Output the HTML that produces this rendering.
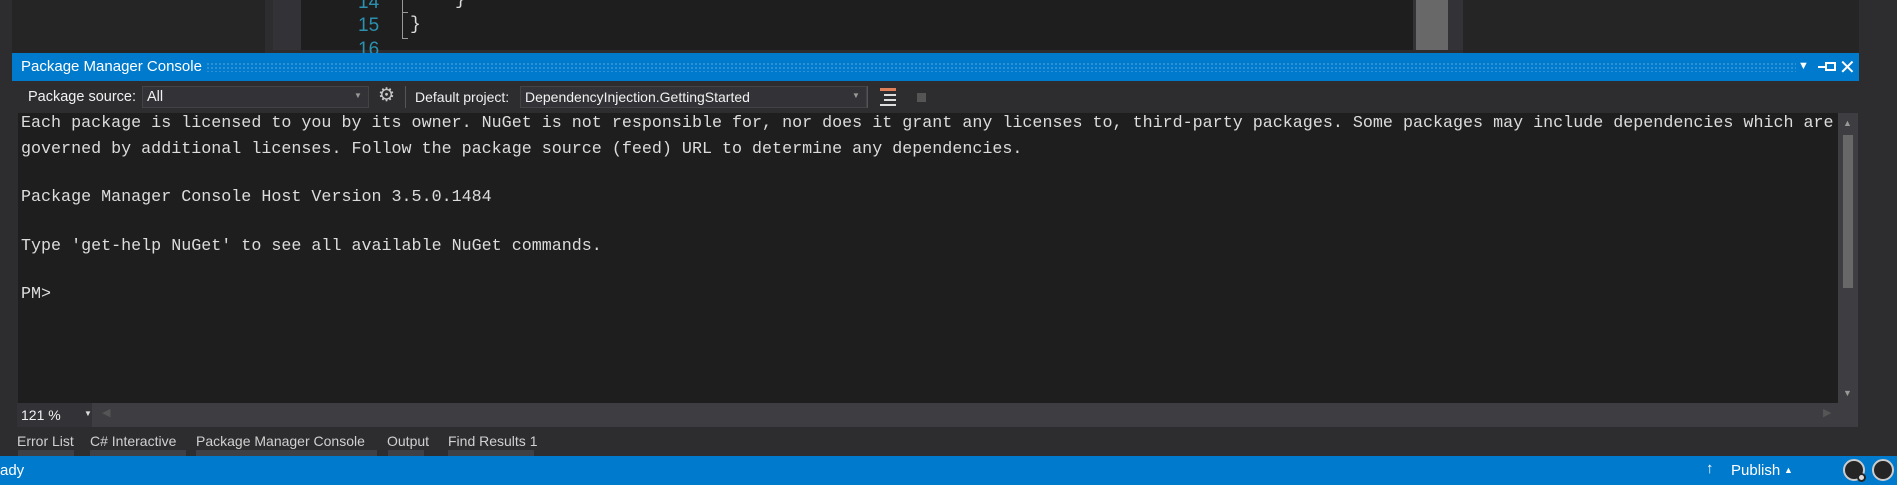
<!DOCTYPE html>
<html><head><style>
*{margin:0;padding:0;box-sizing:border-box}
body{width:1897px;height:485px;background:#2d2d30;position:relative;overflow:hidden;font-family:"Liberation Sans",sans-serif;color:#f1f1f1}
.a{position:absolute}
.ui{font-family:"Liberation Sans",sans-serif;font-size:14.5px;white-space:nowrap;line-height:18px}
.mono{font-family:"Liberation Mono",monospace;font-size:16.7px;color:#dcdcdc;white-space:pre;line-height:24.2px}
.ln{font-family:"Liberation Sans",sans-serif;font-size:19px;color:#2b91af;line-height:22px}
</style></head><body>
<!-- top editor area -->
<div class="a" style="left:12px;top:0;width:253px;height:53px;background:#252526"></div>
<div class="a" style="left:273px;top:0;width:28px;height:50px;background:#333337"></div>
<div class="a" style="left:301px;top:0;width:1112px;height:50px;background:#1e1e1e"></div>
<div class="a ln" style="left:358px;top:-8px">14</div>
<div class="a ln" style="left:358px;top:15px">15</div>
<div class="a ln" style="left:358px;top:39px">16</div>
<div class="a mono" style="left:455px;top:-12px;font-size:18px">}</div>
<div class="a mono" style="left:410px;top:13px;font-size:18px">}</div>
<div class="a" style="left:402px;top:0;width:1px;height:39px;background:#999"></div>
<div class="a" style="left:402px;top:12px;width:6px;height:1px;background:#999"></div>
<div class="a" style="left:402px;top:38px;width:6px;height:1px;background:#999"></div>
<div class="a" style="left:1413px;top:0;width:50px;height:50px;background:#333337"></div>
<div class="a" style="left:1416px;top:0;width:32px;height:50px;background:#686868"></div>
<div class="a" style="left:1463px;top:0;width:396px;height:53px;background:#252526"></div>
<!-- title -->
<div class="a" style="left:12px;top:53px;width:1847px;height:28px;background:#007acc"></div>
<div class="a" style="left:206px;top:62px;width:1590px;height:10px;background-image:radial-gradient(#3d9ad8 0.8px,transparent 1px);background-size:4px 4px"></div>
<div class="a ui" style="left:21px;top:58px;font-size:15px;color:#fff">Package Manager Console</div>
<div class="a" style="left:1798px;top:60px;font-size:11px;color:#fff">▼</div>
<div class="a" style="left:1818px;top:66px;width:8px;height:2px;background:#fff"></div>
<div class="a" style="left:1825px;top:62px;width:11px;height:9px;border:2px solid #fff"></div>
<div class="a" style="left:1839px;top:55px;font-size:20px;color:#fff">✕</div>
<!-- toolbar -->
<div class="a ui" style="left:28px;top:88px">Package source:</div>
<div class="a" style="left:142px;top:86px;width:227px;height:22px;background:#333337;border:1px solid #434346"></div>
<div class="a ui" style="left:147px;top:88px">All</div>
<div class="a" style="left:354px;top:91px;font-size:8px;color:#999">▼</div>
<div class="a" style="left:378px;top:84px;font-size:19px;color:#c8c8c8">⚙</div>
<div class="a" style="left:405px;top:86px;width:1px;height:22px;background:#555"></div>
<div class="a ui" style="left:415px;top:88px;font-size:14px">Default project:</div>
<div class="a" style="left:520px;top:86px;width:347px;height:22px;background:#333337;border:1px solid #434346"></div>
<div class="a ui" style="left:525px;top:88px;font-size:14px">DependencyInjection.GettingStarted</div>
<div class="a" style="left:852px;top:91px;font-size:8px;color:#999">▼</div>
<div class="a" style="left:867px;top:86px;width:1px;height:22px;background:#555"></div>
<div class="a" style="left:880px;top:88px;width:16px;height:3px;background:#e0805a"></div>
<div class="a" style="left:884px;top:94px;width:12px;height:2px;background:#ddd"></div>
<div class="a" style="left:884px;top:99px;width:12px;height:2px;background:#ddd"></div>
<div class="a" style="left:880px;top:104px;width:16px;height:2px;background:#ddd"></div>
<div class="a" style="left:917px;top:93px;width:9px;height:9px;background:#555"></div>
<!-- console -->
<div class="a" style="left:18px;top:113px;width:1820px;height:290px;background:#1e1e1e"></div>
<div class="a mono" style="left:21px;top:112px">Each package is licensed to you by its owner. NuGet is not responsible for, nor does it grant any licenses to, third-party packages. Some packages may include dependencies which are</div>
<div class="a mono" style="left:21px;top:138px">governed by additional licenses. Follow the package source (feed) URL to determine any dependencies.

Package Manager Console Host Version 3.5.0.1484

Type 'get-help NuGet' to see all available NuGet commands.

PM></div>
<div class="a" style="left:1838px;top:113px;width:20px;height:290px;background:#3e3e42"></div>
<div class="a" style="left:1843px;top:135px;width:10px;height:153px;background:#686868"></div>
<div class="a" style="left:1843px;top:118px;font-size:9px;color:#999">▲</div>
<div class="a" style="left:1843px;top:388px;font-size:9px;color:#999">▼</div>
<!-- zoom bar -->
<div class="a" style="left:17px;top:403px;width:1841px;height:24px;background:#3e3e42"></div>
<div class="a" style="left:17px;top:403px;width:75px;height:24px;background:#333337"></div>
<div class="a ui" style="left:21px;top:406px;font-size:14px">121 %</div>
<div class="a" style="left:84px;top:409px;font-size:8px;color:#ddd">▼</div>
<div class="a" style="left:102px;top:406px;font-size:11px;color:#555">◀</div>
<div class="a" style="left:1823px;top:406px;font-size:11px;color:#555">▶</div>
<!-- tabs -->
<div class="a ui" style="left:17px;top:432px;font-size:14px;color:#d0d0d0">Error List</div>
<div class="a ui" style="left:90px;top:432px;font-size:14px;color:#d0d0d0">C# Interactive</div>
<div class="a ui" style="left:196px;top:432px;font-size:14px;color:#d0d0d0">Package Manager Console</div>
<div class="a ui" style="left:387px;top:432px;font-size:14px;color:#d0d0d0">Output</div>
<div class="a ui" style="left:448px;top:432px;font-size:14px;color:#d0d0d0">Find Results 1</div>
<div class="a" style="left:18px;top:450px;width:56px;height:6px;background:#3f3f46"></div>
<div class="a" style="left:90px;top:450px;width:96px;height:6px;background:#3f3f46"></div>
<div class="a" style="left:196px;top:450px;width:181px;height:6px;background:#3f3f46"></div>
<div class="a" style="left:388px;top:450px;width:36px;height:6px;background:#3f3f46"></div>
<div class="a" style="left:448px;top:450px;width:86px;height:6px;background:#3f3f46"></div>
<!-- status -->
<div class="a" style="left:0;top:456px;width:1897px;height:29px;background:#007acc"></div>
<div class="a ui" style="left:0;top:462px;font-size:15px;color:#fff">ady</div>
<div class="a" style="left:1706px;top:460px;font-size:15px;color:#fff;font-weight:bold">↑</div>
<div class="a ui" style="left:1731px;top:462px;font-size:15px;color:#fff">Publish</div>
<div class="a" style="left:1784px;top:465px;font-size:9px;color:#fff">▲</div>
<div class="a" style="left:1843px;top:459px;width:22px;height:22px;border-radius:50%;background:#252526;border:2px solid #ccc"></div>
<div class="a" style="left:1857px;top:473px;width:9px;height:9px;border-radius:50%;background:#ddd;border:2px solid #252526"></div>
<div class="a" style="left:1872px;top:459px;width:22px;height:22px;border-radius:50%;background:#252526;border:2px solid #ccc"></div>
</body></html>
